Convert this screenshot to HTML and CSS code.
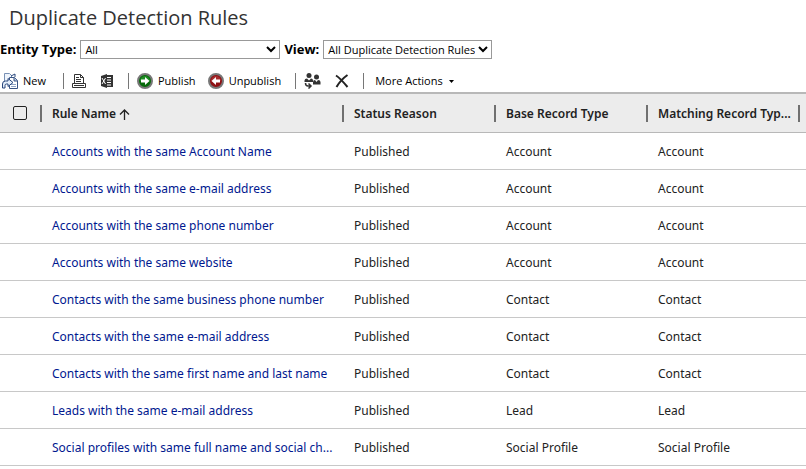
FILE: index.html
```html
<!DOCTYPE html>
<html lang="en">
<head>
  <meta charset="UTF-8" />
  <meta name="viewport" content="width=device-width, initial-scale=1.0"/>
  <title>Duplicate Detection Rules</title>
  <link rel="stylesheet" href="styles.css">
</head>
<body>

  <h1>Duplicate Detection Rules</h1>

  <div class="filters">
    <label for="entityType">Entity Type:</label>
    <select id="entityType" class="entity-select">
      <option>All</option>
      <option>Account</option>
      <option>Contact</option>
      <option>Lead</option>
    </select>
    <label for="view">View:</label>
    <select id="view" class="view-select">
      <option>All Duplicate Detection Rules</option>
      <option>Published Rules</option>
    </select>
  </div>

  <div class="toolbar">
    <button class="new-btn">
      <svg width="16" height="16" viewBox="0 0 16 16">
        <path d="M2.500 0.500h5l2 2v8h-7z" fill="#eef4fc" stroke="#7890b4"/>
        <path d="M7.500 4.500h5l3 3v8h-8z" fill="#fff" stroke="#3a5484"/>
        <path d="M12 4.500v3.500h3.500" fill="#b8c8e0" stroke="#3a5484"/>
        <path d="M9 11.500h5M9 13.500h5" stroke="#8fa4c6"/>
        <path d="M0.500 15V11q0-3 3-3H6V5.500L11 9.500 6 13.500V11H4.500q-1.500 0-1.500 1.500V15z" fill="#e4eefa" stroke="#29477c"/>
        <path d="M9 3l4-2v3" fill="none" stroke="#29477c"/>
      </svg>
      New
    </button>
    <span class="divider"></span>
    <button class="icon-btn" aria-label="Print">
      <svg width="14" height="14" viewBox="0 0 14 14">
        <path d="M2.500 9V0.500h6l3 3V9" fill="#fff" stroke="#333"/>
        <path d="M8.500 0.500v3h3" fill="none" stroke="#333"/>
        <path d="M4 3.500h3M4 5.500h5M4 7.500h5" stroke="#333"/>
        <path d="M0.500 9.500h13v4H0.500z" fill="#fff" stroke="#333"/>
        <path d="M2 11.500h10" stroke="#333"/>
      </svg>
    </button>
    <button class="icon-btn excel-btn" aria-label="Export to Excel">
      <svg width="14" height="14" viewBox="0 0 14 14">
        <path d="M7 1h6v12H7z" fill="#333"/>
        <path d="M7 3.500h4M7 6h4M7 8.500h4M7 11h4" stroke="#fff" stroke-width="1.200"/>
        <path d="M1 2l6-2v14l-6-2z" fill="#333"/>
        <path d="M2 4l3.500 6M5.500 4L2 10" stroke="#fff"/>
      </svg>
    </button>
    <span class="divider"></span>
    <button>
      <svg width="16" height="16" viewBox="0 0 16 16">
        <circle cx="8" cy="8" r="7" fill="#066a0a" stroke="#777" stroke-width="2"/>
        <path d="M3 8a5 5 0 0 1 10 0z" fill="#1f8c24"/>
        <path d="M4 6.500h4V4l4.500 4L8 12V9.500H4z" fill="#fff"/>
      </svg>
      Publish
    </button>
    <button class="unpublish-btn">
      <svg width="16" height="16" viewBox="0 0 16 16">
        <circle cx="8" cy="8" r="7" fill="#8e1014" stroke="#777" stroke-width="2"/>
        <path d="M3 8a5 5 0 0 1 10 0z" fill="#a82c2e"/>
        <path d="M12 6.500H8V4L3.500 8 8 12V9.500h4z" fill="#fff"/>
      </svg>
      Unpublish
    </button>
    <span class="divider"></span>
    <button class="icon-btn" aria-label="Assign">
      <svg width="17" height="16" viewBox="0 0 17 16">
        <circle cx="5" cy="2.500" r="2.500" fill="#333"/>
        <path d="M0.500 9V7.500Q0.500 5.500 3 5.500l2 2 2-2q2 0 2 2V9z" fill="#333"/>
        <circle cx="12.500" cy="4" r="2.500" fill="#333"/>
        <path d="M9 11.500V9Q9 7 11 7l1.500 2L14 7q2.500 0 2.500 2v2.500z" fill="#333"/>
        <path d="M1.500 10q0 3 2.500 3h3M4.500 10.500L7 13l-2.500 2.500" fill="none" stroke="#333" stroke-width="1.500"/>
      </svg>
    </button>
    <button class="icon-btn" aria-label="Delete">
      <svg width="14" height="14" viewBox="0 0 14 14">
        <path d="M1 1.500Q5 4 12.500 13M12.500 1Q6 5.500 1.500 13" fill="none" stroke="#222" stroke-width="2"/>
      </svg>
    </button>
    <span class="divider"></span>
    <button class="more-btn">
      More Actions
      <svg width="5" height="3" viewBox="0 0 5 3"><path d="M0 0h5L2.500 3z" fill="#000"/></svg>
    </button>
  </div>

  <table>
    <colgroup>
      <col class="check-col">
      <col>
      <col class="data-col">
      <col class="data-col">
      <col class="data-col">
      <col class="end-col">
    </colgroup>
    <thead>
      <tr>
        <th class="check-cell"><input type="checkbox" aria-label="Select all rules" /></th>
        <th>
          <div class="heading">Rule Name
            <svg width="11" height="11" viewBox="0 0 11 11"><path d="M5.500 11V1M1 5.500L5.500 1 10 5.500" fill="none" stroke="#222" stroke-width="1.300"/></svg>
          </div>
        </th>
        <th><div class="heading">Status Reason</div></th>
        <th><div class="heading">Base Record Type</div></th>
        <th><div class="heading">Matching Record Typ...</div></th>
        <th><div class="heading"></div></th>
      </tr>
    </thead>
    <tbody>
      <tr>
        <td></td>
        <td><a href="#">Accounts with the same Account Name</a></td>
        <td>Published</td>
        <td>Account</td>
        <td>Account</td>
        <td></td>
      </tr>
      <tr>
        <td></td>
        <td><a href="#">Accounts with the same e-mail address</a></td>
        <td>Published</td>
        <td>Account</td>
        <td>Account</td>
        <td></td>
      </tr>
      <tr>
        <td></td>
        <td><a href="#">Accounts with the same phone number</a></td>
        <td>Published</td>
        <td>Account</td>
        <td>Account</td>
        <td></td>
      </tr>
      <tr>
        <td></td>
        <td><a href="#">Accounts with the same website</a></td>
        <td>Published</td>
        <td>Account</td>
        <td>Account</td>
        <td></td>
      </tr>
      <tr>
        <td></td>
        <td><a href="#">Contacts with the same business phone number</a></td>
        <td>Published</td>
        <td>Contact</td>
        <td>Contact</td>
        <td></td>
      </tr>
      <tr>
        <td></td>
        <td><a href="#">Contacts with the same e-mail address</a></td>
        <td>Published</td>
        <td>Contact</td>
        <td>Contact</td>
        <td></td>
      </tr>
      <tr>
        <td></td>
        <td><a href="#">Contacts with the same first name and last name</a></td>
        <td>Published</td>
        <td>Contact</td>
        <td>Contact</td>
        <td></td>
      </tr>
      <tr>
        <td></td>
        <td><a href="#">Leads with the same e-mail address</a></td>
        <td>Published</td>
        <td>Lead</td>
        <td>Lead</td>
        <td></td>
      </tr>
      <tr>
        <td></td>
        <td><a href="#">Social profiles with same full name and social ch...</a></td>
        <td>Published</td>
        <td>Social Profile</td>
        <td>Social Profile</td>
        <td></td>
      </tr>
    </tbody>
  </table>

</body>
</html>
```

FILE: styles.css
```css
body {
  font-family: "Noto Sans", "Open Sans", sans-serif;
  font-size: 12px;
  color: #222;
  background-color: white;
  margin: 0;
}

h1 {
  margin: 0;
  padding: 4px 9px 0;
  font-family: "Open Sans", sans-serif;
  font-size: 20px;
  line-height: 28px;
  font-weight: normal;
  color: #333;
}

.filters {
  display: flex;
  align-items: center;
  height: 20px;
  margin-top: 7px;
  white-space: nowrap;
}

.filters label {
  font-family: "Open Sans", sans-serif;
  font-size: 13px;
  font-weight: bold;
  color: #000;
  margin-right: 4px;
}

select {
  height: 19px;
  padding: 0;
  border: 1px solid #999;
  border-radius: 0;
  background-color: white;
  color: #000;
  font-family: "Open Sans", sans-serif;
  font-size: 11px;
}

.entity-select {
  width: 200px;
  margin-right: 4px;
}

.view-select {
  width: 169px;
}

.toolbar {
  display: flex;
  align-items: center;
  height: 22px;
  padding: 11px 0 0 2px;
}

.toolbar button {
  display: flex;
  align-items: center;
  gap: 5px;
  padding: 0;
  border: none;
  background: none;
  color: #000;
  font-family: "Open Sans", sans-serif;
  font-size: 11px;
  line-height: 16px;
  white-space: nowrap;
  cursor: pointer;
}

.divider {
  width: 1px;
  height: 16px;
  margin: 0 8px 0 14px;
  background-color: #777;
}

.toolbar .new-btn {
  margin-right: 3px;
}

.toolbar .icon-btn + .icon-btn {
  margin-left: 14px;
}

.toolbar .unpublish-btn {
  margin-left: 12px;
}

.toolbar .more-btn {
  gap: 6px;
  margin-left: 3px;
}

table {
  width: 100%;
  table-layout: fixed;
  border-collapse: separate;
  border-spacing: 0;
}

.check-col {
  width: 40px;
}

.data-col {
  width: 152px;
}

.end-col {
  width: 8px;
}

th {
  height: 38px;
  padding: 0;
  background-color: #ececec;
  border-top: 2px solid #b8b8b8;
  border-bottom: 1px solid #b8b8b8;
  font-weight: 600;
  text-align: left;
}

.check-cell {
  text-align: center;
}

.heading {
  height: 17px;
  line-height: 17px;
  padding-left: 10px;
  border-left: 2px solid #707070;
  white-space: nowrap;
  overflow: hidden;
  text-overflow: ellipsis;
}

.heading svg {
  vertical-align: -2px;
}

input[type="checkbox"] {
  appearance: none;
  display: block;
  width: 14px;
  height: 14px;
  margin: 0 auto;
  border: 1px solid #222;
  border-radius: 2px;
}

td {
  height: 36px;
  padding: 0 4px 0 12px;
  border-bottom: 1px solid #c8c8c8;
  white-space: nowrap;
  overflow: hidden;
  text-overflow: ellipsis;
}

td:last-child {
  padding: 0;
}

td a {
  color: #00188f;
  text-decoration: none;
}
```
